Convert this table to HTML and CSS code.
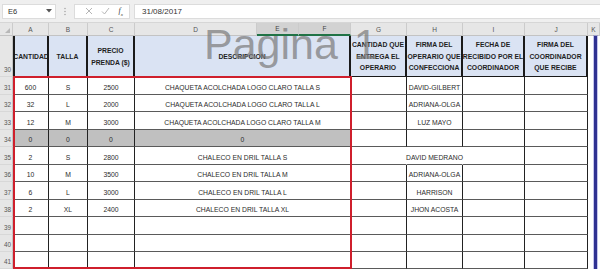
FILE: index.html
```html
<!DOCTYPE html>
<html lang="es">
<head>
<meta charset="utf-8">
<title>Hoja</title>
<link rel="stylesheet" href="styles.css">
</head>
<body>
<div class="fbar">
  <div class="namebox"><span>E6</span><svg class="dd" width="6" height="4" viewBox="0 0 6 4"><path d="M0 0h6L3 3.5z" fill="#555"/></svg></div>
  <div class="sep"><svg width="2" height="9" viewBox="0 0 2 9"><circle cx="1" cy="1.5" r="0.7" fill="#999"/><circle cx="1" cy="4.5" r="0.7" fill="#999"/><circle cx="1" cy="7.5" r="0.7" fill="#999"/></svg></div>
  <div class="fxbox">
    <svg width="8" height="8" viewBox="0 0 8 8"><path d="M1 1L7 7M7 1L1 7" stroke="#b5b5b5" stroke-width="1"/></svg>
    <svg width="9" height="8" viewBox="0 0 9 8"><path d="M1 4.5L3.5 7L8 1" stroke="#b5b5b5" stroke-width="1" fill="none"/></svg>
    <span class="fx">f<sub>x</sub></span>
  </div>
  <div class="finput">31/08/2017</div>
</div>

<div class="wrap">
<div class="sheet">
  <div class="ch corner"><svg width="5" height="5" viewBox="0 0 5 5"><path d="M5 0V5H0z" fill="#b8b8b8"/></svg></div>
  <div class="ch">A</div><div class="ch">B</div><div class="ch">C</div><div class="ch">D</div>
  <div class="ch sel">E</div><div class="ch sel">F</div>
  <div class="ch">G</div><div class="ch">H</div><div class="ch">I</div><div class="ch">J</div><div class="ch">K</div>

  <div class="rh">30</div>
  <div class="hd first">CANTIDAD</div>
  <div class="hd">TALLA</div>
  <div class="hd">PRECIO<br>PRENDA ($)</div>
  <div class="hd span3">DESCRIPCION</div>
  <div class="hd">CANTIDAD QUE<br>ENTREGA EL<br>OPERARIO</div>
  <div class="hd">FIRMA DEL<br>OPERARIO QUE<br>CONFECCIONA</div>
  <div class="hd">FECHA DE<br>RECIBIDO POR EL<br>COORDINADOR</div>
  <div class="hd">FIRMA DEL<br>COORDINADOR<br>QUE RECIBE</div>
  <div class="k"></div>

  <div class="rh">31</div><div class="c">600</div><div class="c">S</div><div class="c">2500</div><div class="c span3">CHAQUETA ACOLCHADA LOGO CLARO TALLA S</div><div class="c"></div><div class="c">DAVID-GILBERT</div><div class="c"></div><div class="c"></div><div class="k"></div>
  <div class="rh">32</div><div class="c">32</div><div class="c">L</div><div class="c">2000</div><div class="c span3">CHAQUETA ACOLCHADA LOGO CLARO TALLA L</div><div class="c"></div><div class="c">ADRIANA-OLGA</div><div class="c"></div><div class="c"></div><div class="k"></div>
  <div class="rh">33</div><div class="c">12</div><div class="c">M</div><div class="c">3000</div><div class="c span3">CHAQUETA ACOLCHADA LOGO CLARO TALLA M</div><div class="c"></div><div class="c">LUZ MAYO</div><div class="c"></div><div class="c"></div><div class="k"></div>
  <div class="rh">34</div><div class="c gray">0</div><div class="c gray">0</div><div class="c gray">0</div><div class="c span3 gray">0</div><div class="c"></div><div class="c"></div><div class="c"></div><div class="c"></div><div class="k"></div>
  <div class="rh">35</div><div class="c">2</div><div class="c">S</div><div class="c">2800</div><div class="c span3">CHALECO EN DRIL TALLA S</div><div class="c open"></div><div class="c open">DAVID MEDRANO</div><div class="c"></div><div class="c"></div><div class="k"></div>
  <div class="rh">36</div><div class="c">10</div><div class="c">M</div><div class="c">3500</div><div class="c span3">CHALECO EN DRIL TALLA M</div><div class="c"></div><div class="c">ADRIANA-OLGA</div><div class="c"></div><div class="c"></div><div class="k"></div>
  <div class="rh">37</div><div class="c">6</div><div class="c">L</div><div class="c">3000</div><div class="c span3">CHALECO EN DRIL TALLA L</div><div class="c"></div><div class="c">HARRISON</div><div class="c"></div><div class="c"></div><div class="k"></div>
  <div class="rh">38</div><div class="c">2</div><div class="c">XL</div><div class="c">2400</div><div class="c span3">CHALECO EN DRIL TALLA XL</div><div class="c"></div><div class="c">JHON ACOSTA</div><div class="c"></div><div class="c"></div><div class="k"></div>
  <div class="rh">39</div><div class="c"></div><div class="c"></div><div class="c"></div><div class="c span3"></div><div class="c"></div><div class="c"></div><div class="c"></div><div class="c"></div><div class="k"></div>
  <div class="rh">40</div><div class="c"></div><div class="c"></div><div class="c"></div><div class="c span3"></div><div class="c"></div><div class="c"></div><div class="c"></div><div class="c"></div><div class="k"></div>
  <div class="rh">41</div><div class="c"></div><div class="c"></div><div class="c"></div><div class="c span3"></div><div class="c"></div><div class="c"></div><div class="c"></div><div class="c"></div><div class="k"></div>
</div>
<div class="overlay">
  <div class="watermark">Pagina 1</div>
  <div class="redbox"></div>
  <div class="pagebreak"></div>
</div>
</div>
</body>
</html>
```

FILE: styles.css
```css
html, body {
  margin: 0;
  padding: 0;
  width: 600px;
  height: 269px;
  overflow: hidden;
  background: #ffffff;
  font-family: "Liberation Sans", Arial, sans-serif;
}

/* formula bar */
.fbar {
  height: 23px;
  box-sizing: border-box;
  background: #efefef;
  display: flex;
  align-items: center;
  padding: 2px 0 2px 2px;
  border-bottom: 1px solid #d6d6d6;
}
.namebox {
  width: 54px;
  height: 15px;
  box-sizing: border-box;
  background: #fff;
  border: 1px solid #dcdcdc;
  display: flex;
  align-items: center;
  justify-content: space-between;
  padding: 0 3px 0 5px;
  font-size: 7.5px;
  color: #333;
}
.sep {
  width: 18px;
  display: flex;
  justify-content: center;
  align-items: center;
}
.fxbox {
  width: 56px;
  height: 15px;
  box-sizing: border-box;
  background: #fff;
  border: 1px solid #dcdcdc;
  display: flex;
  align-items: center;
  justify-content: space-around;
  padding: 0 2px 0 6px;
}
.fx {
  font-family: "Liberation Serif", serif;
  font-style: italic;
  font-size: 8px;
  color: #444;
}
.fx sub { font-size: 5px; }
.finput {
  flex: 1;
  height: 15px;
  box-sizing: border-box;
  margin-left: 4px;
  background: #fff;
  border: 1px solid #dcdcdc;
  border-right: none;
  display: flex;
  align-items: center;
  padding-left: 7px;
  font-size: 8px;
  color: #333;
}

/* sheet grid, with an overlay grid stacked in the same cell */
.wrap {
  display: grid;
}
.sheet, .overlay {
  grid-area: 1 / 1;
  display: grid;
  grid-template-columns: 13px 36px 39px 47px 122px 42px 52px 56px 56px 62px 63px 12px;
  grid-template-rows: 13px 41px 18px 17px 18px 17px 18px 17px 18px 17px 18px 17px 17px;
}
.sheet {
  font-size: 6.8px;
  color: #2b2b2b;
}
.overlay {
  pointer-events: none;
  z-index: 1;
}
.sheet > div, .overlay > div { box-sizing: border-box; }

.ch {
  background: #e6e6e6;
  border-right: 1px solid #cbcbcb;
  border-bottom: 1px solid #c3c3c3;
  color: #555;
  font-size: 6.5px;
  display: flex;
  align-items: center;
  justify-content: center;
}
.ch.sel {
  background: #d2d2d2;
  border-bottom: 2px solid #217346;
  color: #444;
}
.ch.corner {
  justify-content: flex-end;
  align-items: flex-end;
  padding: 0 2px 2px 0;
}
.ch.corner svg { display: block; }

.rh {
  background: #e6e6e6;
  border-right: 1px solid #c3c3c3;
  border-bottom: 1px solid #d8d8d8;
  color: #555;
  font-size: 6.3px;
  display: flex;
  align-items: flex-end;
  justify-content: flex-end;
  padding: 0 1px 3px 0;
  line-height: 7px;
}

.hd {
  background: #dae3f3;
  border-right: 2px solid #1a1a1a;
  border-bottom: 1px solid #1a1a1a;
  font-weight: bold;
  color: #1e1e1e;
  text-align: center;
  line-height: 11.5px;
  display: flex;
  align-items: center;
  justify-content: center;
  white-space: nowrap;
  padding-top: 1px;
}
.hd.first { border-left: 2px solid #1a1a1a; }
.span3 { grid-column: span 3; }

.k { background: #fff; }

.c {
  border-right: 1px solid #222;
  border-bottom: 1px solid #5a5a5a;
  display: flex;
  align-items: flex-end;
  justify-content: center;
  padding-bottom: 3px;
  line-height: 7px;
  white-space: nowrap;
  overflow: visible;
}
.c.gray { background: #c0c0c0; }
.c.open { border-right-color: transparent; }

/* overlays that sit on top of the cells */
.watermark {
  grid-column: 5 / 10;
  grid-row: 1 / 3;
  padding: 0 0 0 69px;
  margin-top: 0;
  font-size: 43px;
  line-height: 43px;
  color: rgba(125, 125, 125, 0.72);
  white-space: nowrap;
  word-spacing: 4px;
}
.redbox {
  grid-column: 2 / 8;
  grid-row: 3 / 14;
  border: 2px solid #cf1f2c;
  margin: -1px -1px 0 0;
}
.pagebreak {
  grid-column: 12 / 13;
  grid-row: 2 / 14;
  margin-left: 6px;
  width: 3px;
  background: #2f3192;
  box-shadow: 0 0 0 1px rgba(90, 90, 200, 0.35);
}
```
